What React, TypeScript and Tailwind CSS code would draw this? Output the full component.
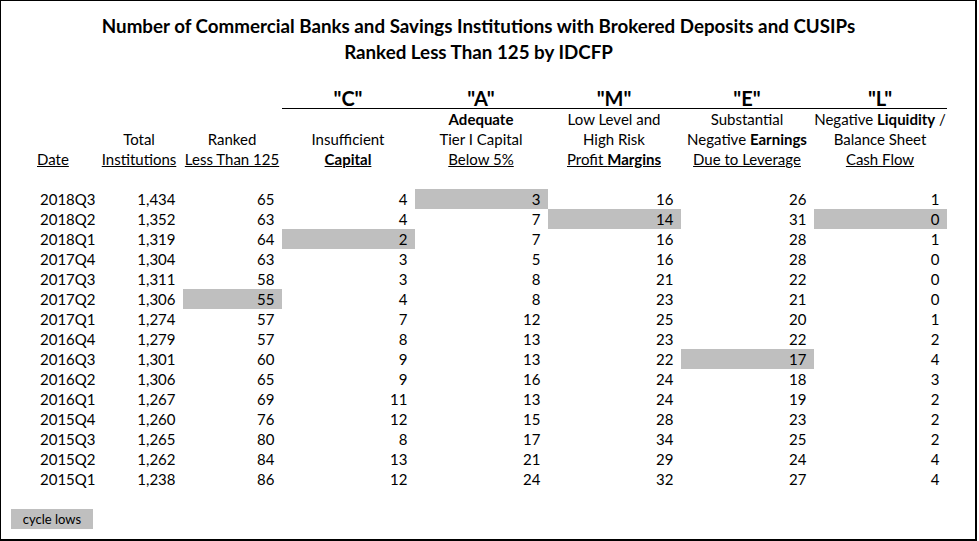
const rows: [string, string, number, number, number, number, number, number][] = [
  ["2018Q3", "1,434", 65, 4, 3, 16, 26, 1],
  ["2018Q2", "1,352", 63, 4, 7, 14, 31, 0],
  ["2018Q1", "1,319", 64, 2, 7, 16, 28, 1],
  ["2017Q4", "1,304", 63, 3, 5, 16, 28, 0],
  ["2017Q3", "1,311", 58, 3, 8, 21, 22, 0],
  ["2017Q2", "1,306", 55, 4, 8, 23, 21, 0],
  ["2017Q1", "1,274", 57, 7, 12, 25, 20, 1],
  ["2016Q4", "1,279", 57, 8, 13, 23, 22, 2],
  ["2016Q3", "1,301", 60, 9, 13, 22, 17, 4],
  ["2016Q2", "1,306", 65, 9, 16, 24, 18, 3],
  ["2016Q1", "1,267", 69, 11, 13, 24, 19, 2],
  ["2015Q4", "1,260", 76, 12, 15, 28, 23, 2],
  ["2015Q3", "1,265", 80, 8, 17, 34, 25, 2],
  ["2015Q2", "1,262", 84, 13, 21, 29, 24, 4],
  ["2015Q1", "1,238", 86, 12, 24, 32, 27, 4],
];

// cycle lows: "row-col" where col 2 = ranked, 3..7 = C A M E L
const lows = new Set(["0-4", "1-5", "1-7", "2-3", "5-2", "8-6"]);

export default function App() {
  return (
    <div className="w-[977px] h-[541px] bg-white border-l border-t border-r-2 border-b-2 border-black text-black font-['Lato',sans-serif] text-[15px] overflow-hidden">
      <div className="w-[955px] pt-[12px] text-center font-bold text-[18.75px] leading-[26px]">
        <div>Number of Commercial Banks and Savings Institutions with Brokered Deposits and CUSIPs</div>
        <div>Ranked Less Than 125 by IDCFP</div>
      </div>

      <table className="table-fixed border-collapse mt-[23px] leading-[20px]">
        <colgroup>
          <col className="w-[31px]" />
          <col className="w-[60px]" />
          <col className="w-[87px]" />
          <col className="w-[99px]" />
          <col className="w-[133px]" />
          <col className="w-[133px]" />
          <col className="w-[133px]" />
          <col className="w-[133px]" />
          <col className="w-[133px]" />
        </colgroup>
        <thead>
          <tr className="h-[20px] font-bold text-[20px]">
            <th colSpan={4}></th>
            {['"C"', '"A"', '"M"', '"E"', '"L"'].map((l) => (
              <th key={l} className="border-b border-black text-center font-bold p-0">
                {l}
              </th>
            ))}
          </tr>
          <tr className="h-[20px] text-center">
            <td colSpan={4}></td>
            <td></td>
            <td className="font-bold">Adequate</td>
            <td>Low Level and</td>
            <td>Substantial</td>
            <td className="whitespace-nowrap">
              Negative <b>Liquidity</b> /
            </td>
          </tr>
          <tr className="h-[20px] text-center">
            <td></td>
            <td></td>
            <td>Total</td>
            <td>Ranked</td>
            <td>Insufficient</td>
            <td>Tier I Capital</td>
            <td>High Risk</td>
            <td className="whitespace-nowrap">
              Negative <b>Earnings</b>
            </td>
            <td>Balance Sheet</td>
          </tr>
          <tr className="h-[20px] text-center">
            <td></td>
            <td className="text-left pl-[5px]">
              <span className="underline">Date</span>
            </td>
            <td>
              <span className="underline">Institutions</span>
            </td>
            <td className="whitespace-nowrap">
              <span className="underline">Less Than 125</span>
            </td>
            <td>
              <span className="underline font-bold">Capital</span>
            </td>
            <td>
              <span className="underline">Below 5%</span>
            </td>
            <td>
              <span className="underline">
                Profit <b>Margins</b>
              </span>
            </td>
            <td className="whitespace-nowrap">
              <span className="underline">Due to Leverage</span>
            </td>
            <td>
              <span className="underline">Cash Flow</span>
            </td>
          </tr>
          <tr className="h-[20px]">
            <td colSpan={9}></td>
          </tr>
        </thead>
        <tbody>
          {rows.map((r, i) => (
            <tr key={r[0]} className="h-[20px]">
              <td></td>
              <td className="pl-[8px]">{r[0]}</td>
              <td className="text-right pr-[7px]">{r[1]}</td>
              {r.slice(2).map((v, j) => (
                <td
                  key={j}
                  className={`text-right pr-[7px] ${lows.has(`${i}-${j + 2}`) ? "bg-[#bfbfbf]" : ""}`}
                >
                  {v}
                </td>
              ))}
            </tr>
          ))}
        </tbody>
      </table>

      <div className="ml-[10px] mt-[20px] w-[82px] h-[20px] bg-[#bfbfbf] text-[13px] leading-[20px] text-center">
        cycle lows
      </div>
    </div>
  );
}
